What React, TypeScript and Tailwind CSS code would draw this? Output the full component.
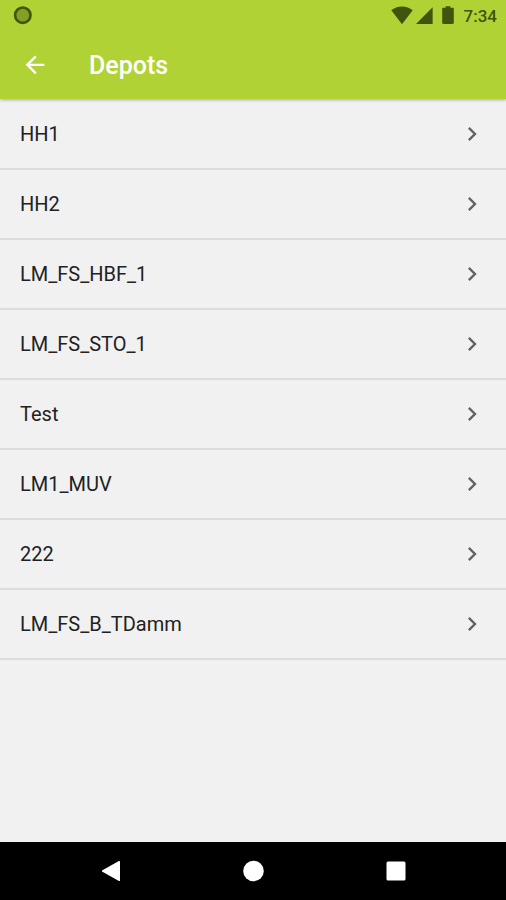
const depots = [
  'HH1',
  'HH2',
  'LM_FS_HBF_1',
  'LM_FS_STO_1',
  'Test',
  'LM1_MUV',
  '222',
  'LM_FS_B_TDamm',
];

function StatusBar() {
  return (
    <div className="flex h-8 items-center justify-between pl-3 pr-[9px] text-[#42530e]">
      <svg className="size-5" viewBox="0 0 20 20" aria-hidden="true">
        <circle cx="10.8" cy="9.2" r="7.7" fill="#82a021" stroke="#42530e" strokeWidth="2.6" />
      </svg>
      <div className="flex items-center">
        <svg className="h-5 w-[22px]" viewBox="0 0 22 20" fill="currentColor" aria-hidden="true">
          <path d="M11 18.2 0.3 4.2C3.2 1.8 6.9 0.4 11 0.4s7.8 1.4 10.7 3.8z" />
        </svg>
        <svg className="ml-[3px] h-5 w-[17px]" viewBox="0 0 17 20" fill="currentColor" aria-hidden="true">
          <path d="M0 18 16.6 1.2V18z" />
        </svg>
        <svg className="ml-[9px] h-5 w-3" viewBox="0 0 12 20" fill="currentColor" aria-hidden="true">
          <path d="M3.6 0.2h4.8v1.6h2.2c.7 0 1.2.5 1.2 1.2v13.8c0 .7-.5 1.2-1.2 1.2H1.400c-.7 0-1.200-.5-1.200-1.200V3c0-.7.5-1.200 1.200-1.200h2.200z" />
        </svg>
        <span className="ml-[10px] text-[17px] leading-5 font-medium">7:34</span>
      </div>
    </div>
  );
}

function Header() {
  return (
    <header className="relative bg-[#b0d235] shadow-[0_1px_3px_rgba(0,0,0,0.3)]">
      <StatusBar />
      <div className="flex h-[67px] items-center px-[21px] text-white">
        <button type="button" aria-label="Back" className="size-7">
          <svg className="size-7" viewBox="0 0 24 24" fill="currentColor" aria-hidden="true">
            <path d="M20 10H7.830l5.590-5.590L12 3l-8 8 8 8 1.410-1.410L7.830 12H20v-2z" />
          </svg>
        </button>
        <h1 className="ml-10 text-[25px] leading-8 font-medium">Depots</h1>
      </div>
    </header>
  );
}

function NavigationBar() {
  return (
    <nav className="grid h-[58px] grid-cols-3 items-center bg-black px-10 text-white">
      <button type="button" aria-label="Back" className="flex justify-center">
        <svg className="size-6" viewBox="0 0 24 24" fill="currentColor" aria-hidden="true">
          <path d="M21 2.600v18.800c0 .6-.6.900-1.100.6L3.400 12.800c-.6-.4-.6-1.200 0-1.600L19.900 2c.5-.3 1.100 0 1.100.6z" />
        </svg>
      </button>
      <button type="button" aria-label="Home" className="flex justify-center">
        <svg className="size-6" viewBox="0 0 24 24" fill="currentColor" aria-hidden="true">
          <circle cx="12.500" cy="12" r="10.300" />
        </svg>
      </button>
      <button type="button" aria-label="Recent apps" className="flex justify-center">
        <svg className="size-6" viewBox="0 0 24 24" fill="currentColor" aria-hidden="true">
          <rect x="3.500" y="2.500" width="19" height="19" rx="1.500" />
        </svg>
      </button>
    </nav>
  );
}

export default function App() {
  return (
    <div className="flex min-h-screen flex-col bg-[#f1f1f1] font-[Roboto,sans-serif]">
      <Header />
      <main className="flex-1 pt-px">
        <ul>
          {depots.map((depot) => (
            <li key={depot} className="border-b-2 border-[#dcdcdc]">
              <button type="button" className="flex h-[68px] w-full items-center justify-between px-5 text-left text-xl text-[#212121]">
                <span>{depot}</span>
                <svg className="size-7 text-[#626262]" viewBox="0 0 24 24" fill="currentColor" aria-hidden="true">
                  <path d="M10 6 8.590 7.410 13.170 12l-4.580 4.590L10 18l6-6z" />
                </svg>
              </button>
            </li>
          ))}
        </ul>
      </main>
      <NavigationBar />
    </div>
  );
}
